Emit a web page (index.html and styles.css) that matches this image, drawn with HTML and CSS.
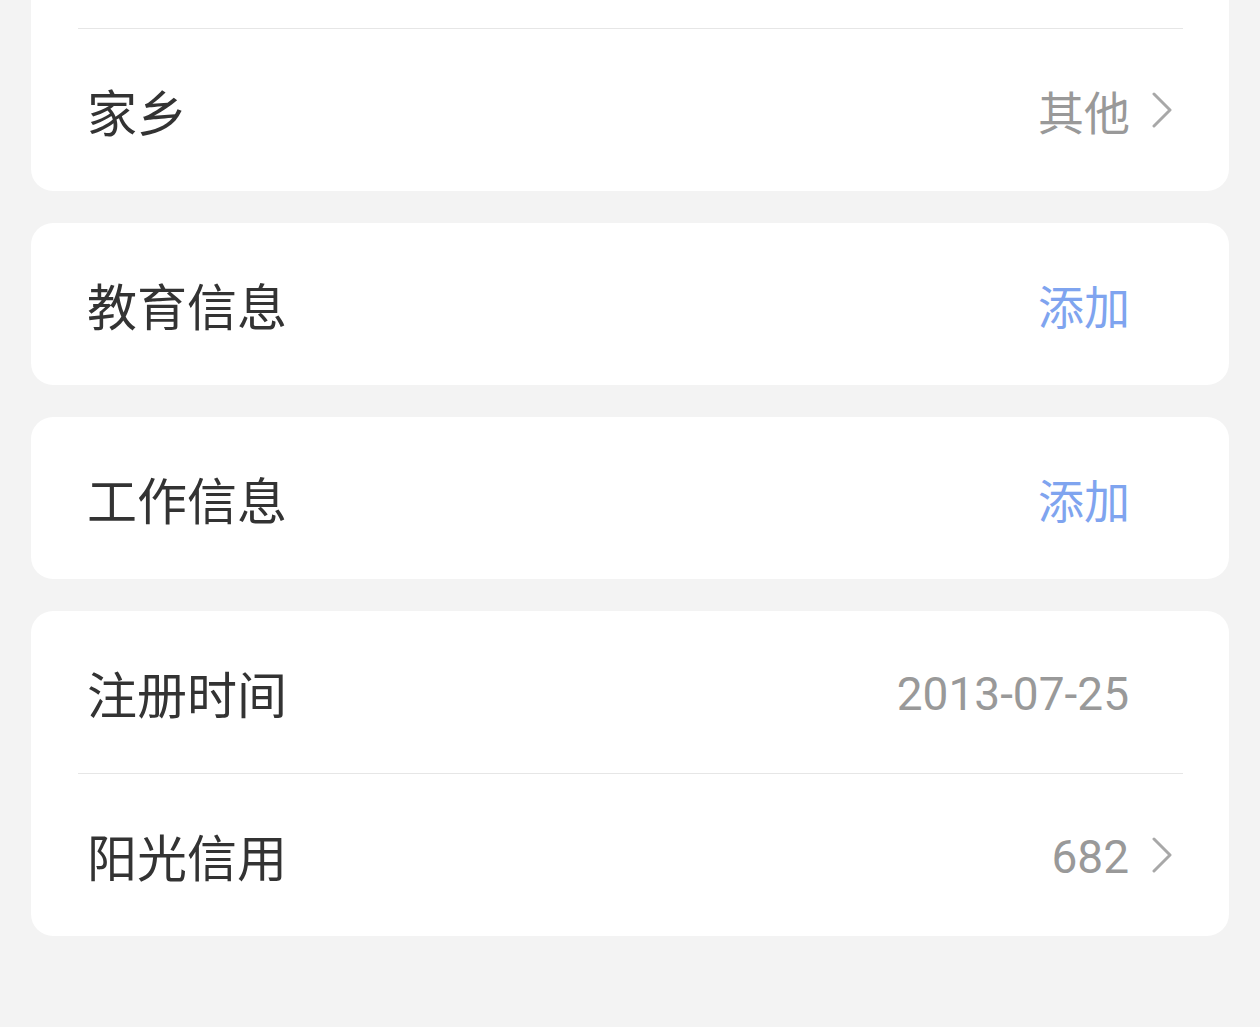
FILE: index.html
```html
<!DOCTYPE html>
<html lang="zh-CN">
<head>
<meta charset="utf-8">
<link rel="stylesheet" href="styles.css">
</head>
<body>
<div class="page">
  <section class="card card-first">
    <div class="row row-hidden"></div>
    <div class="divider"></div>
    <div class="row">
      <span class="label">家乡</span>
      <span class="value">其他</span>
      <span class="arrow"><svg viewBox="0 0 20 36" width="20" height="36"><path d="M2 2 L18 18 L2 34" fill="none" stroke="#a8a8a8" stroke-width="3" stroke-linecap="round" stroke-linejoin="round"/></svg></span>
    </div>
  </section>
  <section class="card">
    <div class="row">
      <span class="label">教育信息</span>
      <span class="value value-link">添加</span>
      <span class="arrow"></span>
    </div>
  </section>
  <section class="card">
    <div class="row">
      <span class="label">工作信息</span>
      <span class="value value-link">添加</span>
      <span class="arrow"></span>
    </div>
  </section>
  <section class="card">
    <div class="row">
      <span class="label">注册时间</span>
      <span class="value num">2013-07-25</span>
      <span class="arrow"></span>
    </div>
    <div class="divider"></div>
    <div class="row">
      <span class="label">阳光信用</span>
      <span class="value num">682</span>
      <span class="arrow"><svg viewBox="0 0 20 36" width="20" height="36"><path d="M2 2 L18 18 L2 34" fill="none" stroke="#a8a8a8" stroke-width="3" stroke-linecap="round" stroke-linejoin="round"/></svg></span>
    </div>
  </section>
</div>
</body>
</html>
```
FILE: styles.css
```css
html, body {
  margin: 0;
  padding: 0;
  background: #f3f3f3;
}
body {
  font-family: "Noto Sans CJK SC", "Noto Sans", sans-serif;
  height: 1027px;
  overflow: hidden;
}
.page {
  padding: 0 31px;
  display: flex;
  flex-direction: column;
  gap: 32px;
  margin-top: -135px;
}
.card {
  background: #ffffff;
  border-radius: 22px;
  display: flex;
  flex-direction: column;
}
.row {
  height: 162px;
  display: flex;
  align-items: center;
  padding: 0 57px 0 56px;
}
.row-hidden {
  height: 163px;
}
.divider {
  height: 1px;
  background: #e6e6e6;
  margin: 0 46px 0 47px;
}
.label {
  flex: 1;
  font-size: 50px;
  color: #333333;
  line-height: 1;
}
.value {
  font-size: 46px;
  color: #999999;
  line-height: 1;
  margin-right: -1px;
}
.value-link {
  color: #7fa4ef;
}
.num {
  font-family: Roboto, "Noto Sans", sans-serif;
  font-size: 46px;
  color: #999999;
  margin-right: 0;
  padding-top: 3px;
}
.arrow {
  width: 43px;
  display: flex;
  justify-content: flex-end;
  align-items: center;
}
.arrow svg {
  display: block;
}
```
